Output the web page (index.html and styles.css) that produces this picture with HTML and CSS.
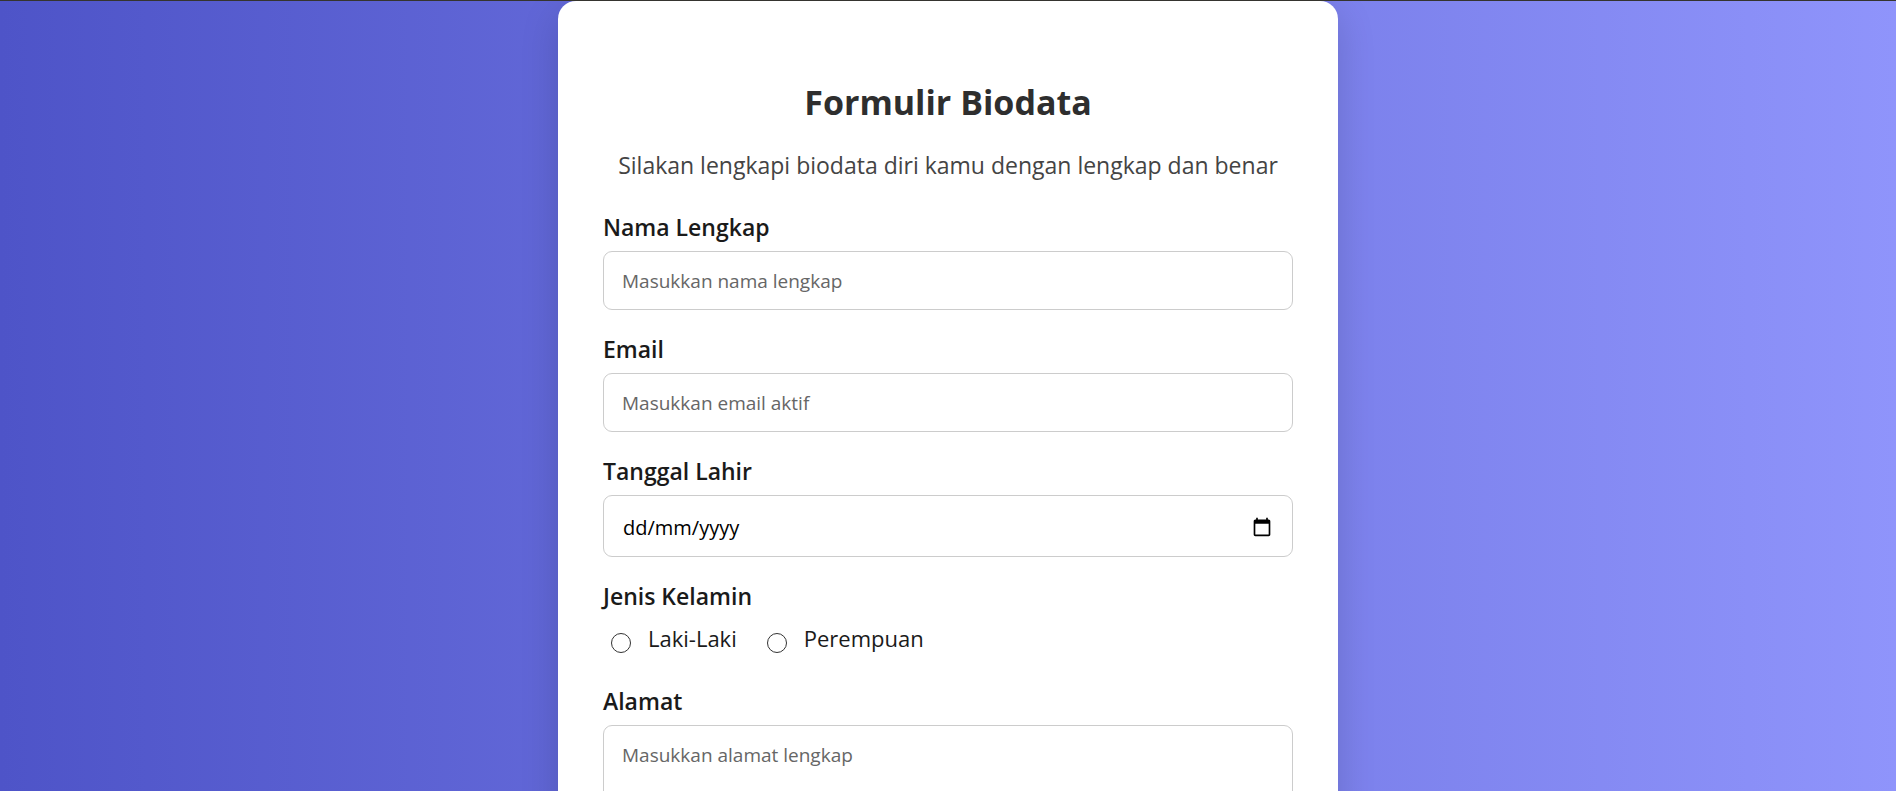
FILE: index.html
```
<!DOCTYPE html>
<html lang="id">
<head>
<meta charset="utf-8">
<meta name="viewport" content="width=device-width, initial-scale=1">
<title>Formulir Biodata</title>
<link rel="stylesheet" href="styles.css">
</head>
<body class="page">
<main class="card">
  <h1 class="title">Formulir Biodata</h1>
  <p class="subtitle">Silakan lengkapi biodata diri kamu dengan lengkap dan benar</p>
  <form class="form">
    <div class="field">
      <label class="label" for="nama">Nama Lengkap</label>
      <input class="control" type="text" id="nama" placeholder="Masukkan nama lengkap">
    </div>
    <div class="field">
      <label class="label" for="email">Email</label>
      <input class="control" type="email" id="email" placeholder="Masukkan email aktif">
    </div>
    <div class="field">
      <label class="label" for="lahir">Tanggal Lahir</label>
      <div class="control date">
        <input class="date-input" type="text" id="lahir" inputmode="numeric" placeholder="dd/mm/yyyy">
        <button class="date-button" type="button" aria-label="Pilih tanggal">
          <svg class="date-icon" viewBox="0 0 24 24" aria-hidden="true"><path d="M20 3h-1V1h-2v2H7V1H5v2H4c-1.100 0-2 .9-2 2v16c0 1.100.9 2 2 2h16c1.100 0 2-.9 2-2V5c0-1.100-.9-2-2-2zm0 18H4V8h16v13z"/></svg>
        </button>
      </div>
    </div>
    <fieldset class="field group">
      <legend class="label">Jenis Kelamin</legend>
      <div class="options">
        <label class="option"><input class="radio" type="radio" name="kelamin" value="L">Laki-Laki</label>
        <label class="option"><input class="radio" type="radio" name="kelamin" value="P">Perempuan</label>
      </div>
    </fieldset>
    <div class="field">
      <label class="label" for="alamat">Alamat</label>
      <textarea class="control area" id="alamat" rows="4" placeholder="Masukkan alamat lengkap"></textarea>
    </div>
  </form>
</main>
</body>
</html>
```
FILE: styles.css
```
* {
  box-sizing: border-box;
}

.page {
  margin: 0;
  height: 100vh;
  overflow: hidden;
  border-top: 1px solid #35342f;
  background: linear-gradient(to right, #4e54c8, #8f94fb);
  font-family: "Segoe UI", "Open Sans", "Noto Sans", sans-serif;
  font-size: 23px;
  line-height: 32px;
  color: #1a1a1a;
}

.card {
  max-width: 780px;
  margin: 0 auto;
  padding: 77px 45px 45px;
  border-radius: 18px;
  background: #fff;
  box-shadow: 0 12px 38px rgba(0, 0, 0, 0.15);
}

.title {
  margin: 0 0 23px;
  font-size: 34px;
  line-height: 48px;
  font-weight: 700;
  text-align: center;
  color: #2e2e2e;
}

.subtitle {
  margin: 0 0 30px;
  text-align: center;
  color: #444;
}

.form {
  display: flex;
  flex-direction: column;
  gap: 23px;
}

.field {
  display: flex;
  flex-direction: column;
  gap: 8px;
}

.group {
  display: block;
  min-width: 0;
  margin: 0;
  padding: 0;
  border: 0;
}

.label {
  padding: 0;
  font-weight: 600;
}

.control {
  width: 100%;
  padding: 15px 18px 13px;
  border: 1px solid #ccc;
  border-radius: 9px;
  background: #fff;
  font-family: inherit;
  font-size: 19px;
  line-height: 29px;
  color: #000;
}

.control::placeholder {
  color: #666;
  opacity: 1;
}

.date {
  display: flex;
  align-items: center;
  padding: 16px 20px 15px 19px;
  font-size: 20px;
}

.date-input {
  flex: 1;
  min-width: 0;
  padding: 2px 0 0;
  border: 0;
  outline: 0;
  background: none;
  font: inherit;
  color: inherit;
}

.date-input::placeholder {
  color: #000;
  opacity: 1;
}

.date-button {
  display: flex;
  padding: 0;
  border: 0;
  background: none;
}

.date-icon {
  width: 20px;
  height: 20px;
}

.date {
  height: 62px;
}

.options {
  display: flex;
  gap: 30px;
  padding: 10px 0 8px 8px;
}

.option {
  display: flex;
  align-items: center;
  gap: 17px;
  font-size: 22px;
}

.radio {
  appearance: none;
  width: 20px;
  height: 20px;
  margin: 9px 0 0;
  border: 1px solid #333;
  border-radius: 50%;
  background: #fff;
}

.radio:checked {
  border: 6px solid #4e54c8;
}

.area {
  height: 150px;
  resize: vertical;
}
```
